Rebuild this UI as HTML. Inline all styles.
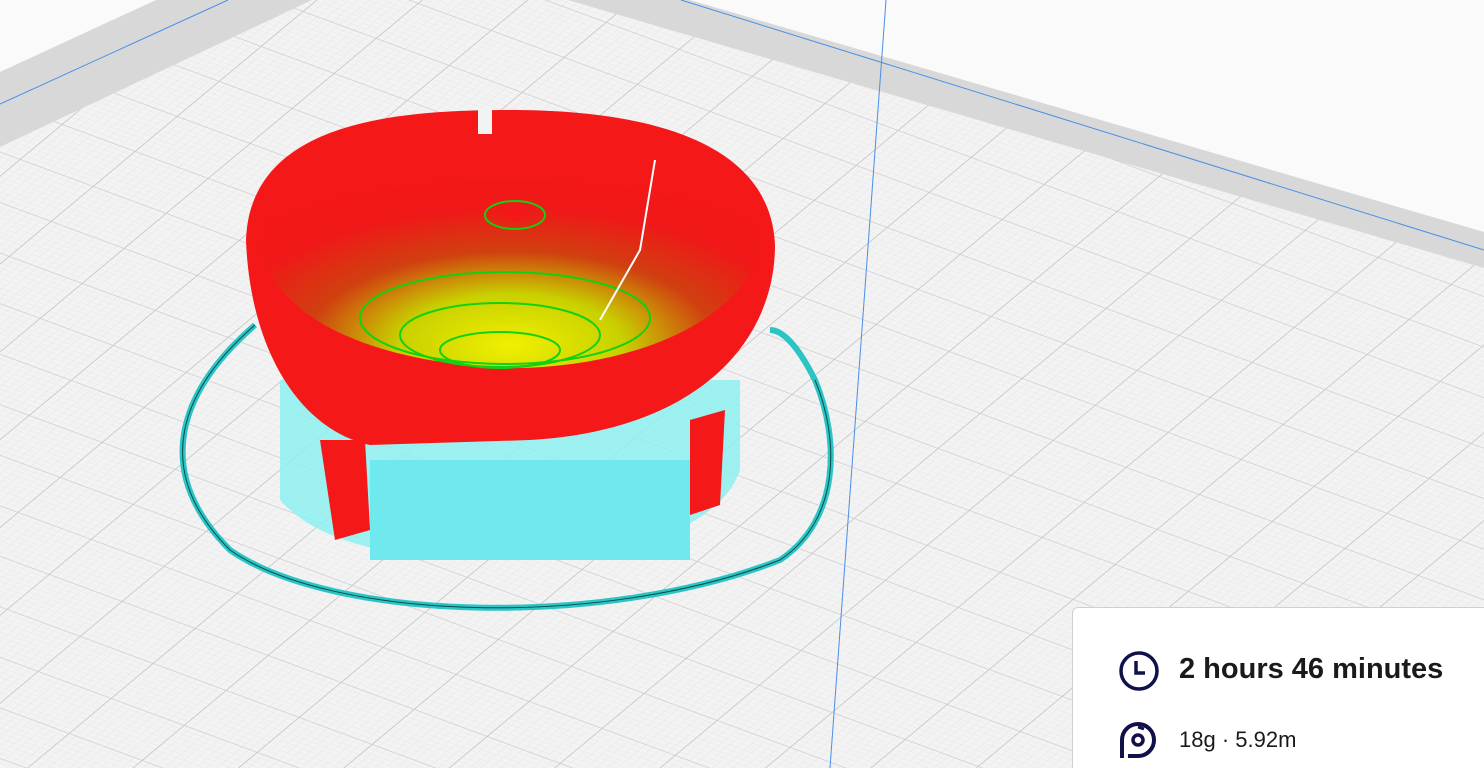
<!DOCTYPE html>
<html style="overflow:hidden;height:768px"><head><style>
body{margin:0;width:1484px;height:768px;overflow:hidden;position:relative;background:#fafafa;font-family:"Liberation Sans",sans-serif}
.p{position:absolute;left:1072px;top:607px;width:430px;height:180px;background:#fff;border:1px solid #d0d0d0;border-radius:6px}
.t{position:absolute;color:#1a1a1a;white-space:nowrap}
</style></head><body>
<svg width="1484" height="768" style="position:absolute;left:0;top:0">
<defs>
<pattern id="g" width="50" height="50" patternUnits="userSpaceOnUse" patternTransform="matrix(1.46,0.54,-0.84,0.7,0,0)">
<rect width="50" height="50" fill="#f3f3f3"/>
<path d="M0 5H50M0 10H50M0 15H50M0 20H50M0 25H50M0 30H50M0 35H50M0 40H50M0 45H50M5 0V50M10 0V50M15 0V50M20 0V50M25 0V50M30 0V50M35 0V50M40 0V50M45 0V50" stroke="#e8e8e8" stroke-width="0.4"/>
<path d="M0 0H50M0 0V50" stroke="#c8c8c8" stroke-width="1.3"/>
</pattern>
<radialGradient id="in" cx="0.5" cy="0.9" r="0.75">
<stop offset="0" stop-color="#f0f000"/><stop offset="0.3" stop-color="#c8d000"/><stop offset="0.55" stop-color="#d04010"/><stop offset="0.8" stop-color="#f01818"/><stop offset="1" stop-color="#f41818"/></radialGradient>
</defs>
<rect width="1484" height="768" fill="#fafafa"/>
<polygon points="0,147 312,0 600,0 1484,268 1484,768 0,768" fill="url(#g)"/>
<polygon points="0,72 156,0 312,0 0,147" fill="#d8d8d8"/>
<polygon points="568,0 690,0 1484,232 1484,268" fill="#d8d8d8"/>
<line x1="0" y1="104" x2="228" y2="0" stroke="#4a8ee8"/>
<line x1="681" y1="0" x2="1484" y2="250" stroke="#4a8ee8"/>
<line x1="886" y1="0" x2="830" y2="768" stroke="#4a8ee8"/>
<path d="M255 325 C180 390 150 470 230 550 C330 620 600 630 780 560 C840 520 840 440 815 380 C795 340 780 330 770 330" fill="none" stroke="#2ac4c4" stroke-width="6"/>
<path d="M255 325 C180 390 150 470 230 550 C330 620 600 630 780 560 C840 520 840 440 815 380" fill="none" stroke="#0a4a4a" stroke-width="1"/>
<path d="M280 380 L740 380 L740 470 C720 530 620 560 500 560 C400 560 320 545 280 500 Z" fill="#8ef0f0" opacity="0.85"/>
<rect x="370" y="460" width="320" height="100" fill="#6fe8ee"/>
<path d="M246 240 C250 120 400 110 510 110 C620 110 770 130 775 245 C775 340 700 430 530 440 L370 445 C300 430 250 350 246 240 Z" fill="#f41818"/>
<path d="M320 440 L335 540 L370 530 L365 440 Z" fill="#f41818"/>
<path d="M690 420 L690 515 L720 505 L725 410 Z" fill="#f41818"/>
<path d="M262 250 C270 160 400 140 510 140 C640 140 760 170 760 250 C740 320 640 365 520 368 C380 366 275 320 262 250 Z" fill="url(#in)"/>
<g fill="none" stroke="#12d012" stroke-width="2">
<ellipse cx="515" cy="215" rx="30" ry="14"/>
<ellipse cx="500" cy="350" rx="60" ry="18"/>
<ellipse cx="500" cy="335" rx="100" ry="32"/>
<ellipse cx="505" cy="318" rx="145" ry="46"/>
</g>
<ellipse cx="515" cy="215" rx="14" ry="6" fill="#f41818"/>
<rect x="478" y="108" width="14" height="26" fill="#f3f3f3"/>
<path d="M655 160 L640 250 L600 320" stroke="#fff" stroke-width="2" fill="none"/>
</svg>
<div class="p">
<svg style="position:absolute;left:46px;top:43px" width="40" height="40"><circle cx="20" cy="20" r="18" fill="none" stroke="#10104a" stroke-width="3.5"/><path d="M17 10V22H26" fill="none" stroke="#10104a" stroke-width="3.5"/></svg>
<div class="t" style="left:106px;top:45px;font-size:29px;font-weight:bold">2 hours 46 minutes</div>
<svg style="position:absolute;left:45px;top:110px" width="40" height="45"><path d="M4 40 L4 22 A16 16 0 1 1 20 38 L10 38" fill="none" stroke="#10104a" stroke-width="4"/><circle cx="20" cy="22" r="5" fill="none" stroke="#10104a" stroke-width="3.5"/><path d="M20 9 L26 11" stroke="#10104a" stroke-width="3"/></svg>
<div class="t" style="left:106px;top:119px;font-size:22px">18g · 5.92m</div>
</div>
</body></html>
